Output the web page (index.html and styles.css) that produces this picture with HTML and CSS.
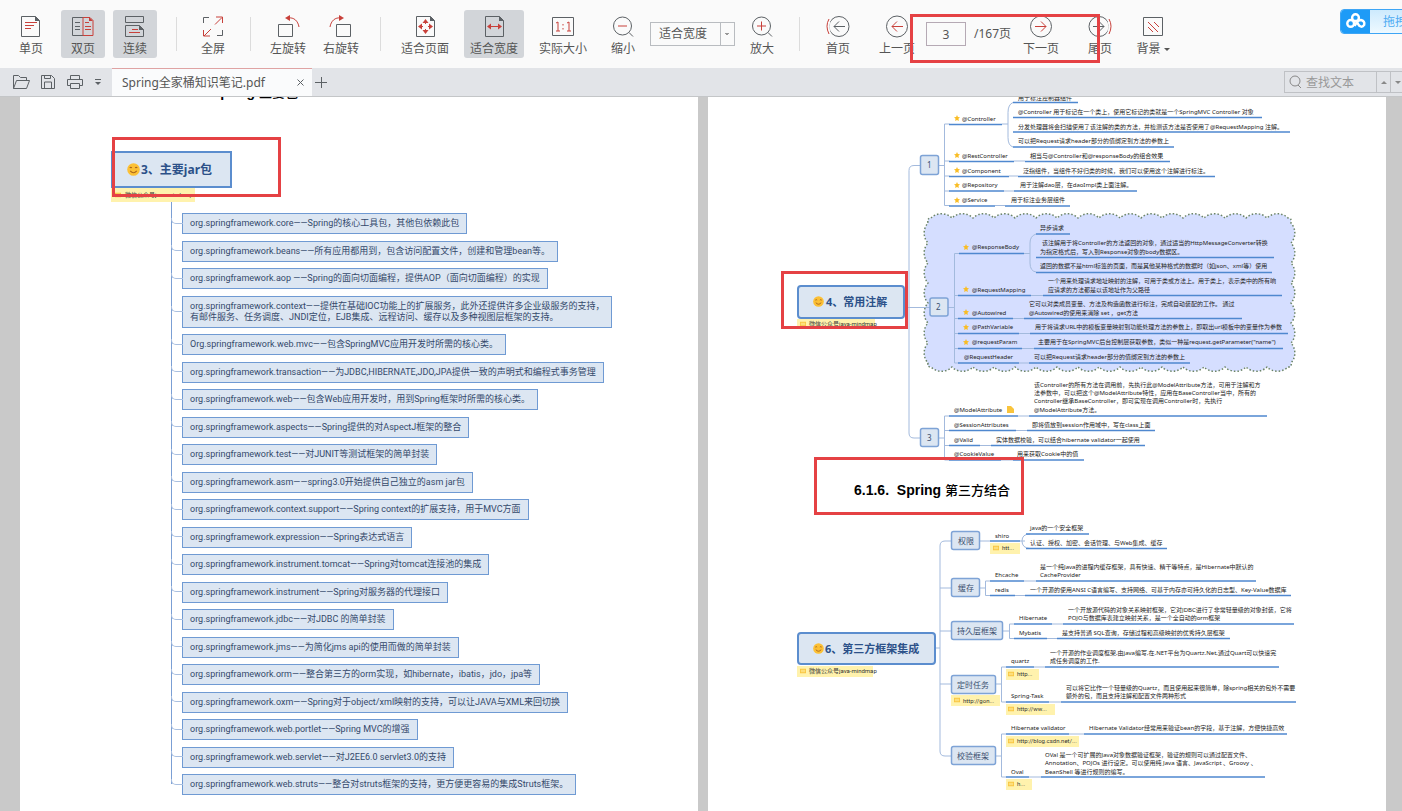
FILE: index.html
```html
<!DOCTYPE html>
<html lang="zh-CN">
<head>
<meta charset="utf-8">
<title>Spring全家桶知识笔记.pdf</title>
<link rel="stylesheet" href="styles.css">
</head>
<body>
<header class="toolbar">
  <div class="group view-group">
    <button class="tool"><svg class="icon" viewBox="0 0 24 24"><path class="g" d="M2.500 2.500h14l4 4v16h-18z"/><path class="gf" d="M16 2l5 5h-5z"/><path class="r" d="M6 8.500h12M6 11.500h9M6 14.500h6"/></svg>单页</button>
    <button class="tool active"><svg class="icon" viewBox="0 0 24 24"><path class="g" d="M12 3.500H1.500v18H12M4 8.500h5M4 12.500h5M4 15.500h5"/><path class="r" d="M12 3.500h7l3 3v15H12zM14 8.500h4M14 12.500h6M14 15.500h6"/><path class="rf" d="M18 3l4 4h-4z"/></svg>双页</button>
    <button class="tool active"><svg class="icon" viewBox="0 0 24 24"><path class="g" d="M2.500 2.500h18v6h-18zM2.500 22.500v-11h14l4 4v7z"/><path class="gf" d="M16 11l5 5h-5z"/><path class="r" d="M9 15.500h6M6 18.500h11"/></svg>连续</button>
  </div>
  <span class="sep"></span>
  <div class="group"><button class="tool"><svg class="icon" viewBox="0 0 24 24"><path class="g" d="M2.500 9V3.500H8M21.500 16v5.500H16"/><path class="r" d="M14 10.500l7-7M15 3h6.500v6M10 15l-7 7M2.500 16v6H9"/></svg>全屏</button></div>
  <span class="sep"></span>
  <div class="group rotate-group">
    <button class="tool three"><svg class="icon" viewBox="0 0 24 24"><path class="g" d="M2.500 10.500h14v12h-14z"/><path class="r" d="M12 4c6-1 10 3 11 9"/><path class="rf" d="M9 4l5-3v6z"/></svg>左旋转</button>
    <button class="tool three"><svg class="icon" viewBox="0 0 24 24"><path class="g" d="M7.500 10.500h14v12h-14z"/><path class="r" d="M12 4C6 3 2 7 1 13"/><path class="rf" d="M15 4l-5-3v6z"/></svg>右旋转</button>
  </div>
  <span class="sep"></span>
  <div class="group fit-group">
    <button class="tool four"><svg class="icon" viewBox="0 0 24 24"><path class="g" d="M3.500 2.500h14l4 4v16h-18z"/><path class="gf" d="M17 2l5 5h-5z"/><path class="r" d="M12.500 7v3M12.500 15v3M7 12.500h3M15 12.500h3"/><path class="rf" d="M12.500 5l3 4h-6zM12.500 20l3-4h-6zM5 12.500l4-3v6zM20 12.500l-4-3v6z"/></svg>适合页面</button>
    <button class="tool four active"><svg class="icon" viewBox="0 0 24 24"><path class="g" d="M3.500 2.500h14l4 4v16h-18z"/><path class="gf" d="M17 2l5 5h-5z"/><path class="r" d="M6 12.500h13"/><path class="rf" d="M5 12.500l4-3v6zM20 12.500l-4-3v6z"/></svg>适合宽度</button>
    <button class="tool four"><svg class="icon" viewBox="0 0 24 24"><path class="g" d="M1.500 3.500h21v18h-21z"/><path class="r" d="M5 9l2-1v9M5 17h4M16 9l2-1v9M16 17h4M12 10v1.500M12 14v1.500"/></svg>实际大小</button>
  </div>
  <div class="group zoom-group">
    <button class="tool"><svg class="icon" viewBox="0 0 24 24"><circle class="g" cx="11.500" cy="12" r="9"/><path class="g" d="M18 18.500l4 4"/><path class="r" d="M7 12h9"/></svg>缩小</button>
    <select class="zoom-select" aria-label="缩放"><option>适合宽度</option></select>
    <button class="tool"><svg class="icon" viewBox="0 0 24 24"><circle class="g" cx="11.500" cy="12" r="9"/><path class="g" d="M18 18.500l4 4"/><path class="r" d="M7 12h9M11.500 7.500v9"/></svg>放大</button>
  </div>
  <span class="sep"></span>
  <div class="group page-group">
    <button class="tool"><svg class="icon" viewBox="0 0 24 24"><circle class="g" cx="13" cy="12.500" r="10"/><path class="g" d="M8 12.500h11M13 7.500l-5 5 5 5"/><path class="halo" d="M4 4q-4 8 0 17"/><path class="r" d="M3 5q-4 7 0 15"/></svg>首页</button>
    <div class="group pager">
      <button class="tool three"><svg class="icon" viewBox="0 0 24 24"><circle class="g" cx="12" cy="12.500" r="10.500"/><path class="r" d="M7 12.500h11M12 7.500l-5 5 5 5"/></svg>上一页</button>
      <input class="page-input" aria-label="页码" value="3">
      <span class="page-total">/167页</span>
      <button class="tool three"><svg class="icon" viewBox="0 0 24 24"><circle class="g" cx="12" cy="12.500" r="10.500"/><path class="r" d="M6 12.500h11M12 7.500l5 5-5 5"/></svg>下一页</button>
      <span class="mark mark-pager"></span>
    </div>
    <button class="tool"><svg class="icon" viewBox="0 0 24 24"><circle class="g" cx="11" cy="12.500" r="10"/><path class="g" d="M5 12.500h11M11 7.500l5 5-5 5"/><path class="halo" d="M20 4q4 8 0 17"/><path class="r" d="M21 5q4 7 0 15"/></svg>尾页</button>
  </div>
  <button class="tool bg-tool"><svg class="icon" viewBox="0 0 24 24"><path class="g" d="M2.500 3.500h19v18h-19z"/><path class="r" d="M7 8l10 10M13 8l5 5M7 13l5 5"/></svg><span>背景<i class="caret"></i></span></button>
  <button class="cloud"><svg class="cloud-logo" viewBox="0 0 30 25"><path fill="#1e9bf7" d="M4 0h26v25H4q-4 0-4-4V4q0-4 4-4z"/><g fill="none" stroke="#fff" stroke-width="2.500"><circle cx="15" cy="8.500" r="3.500"/><circle cx="10" cy="14.500" r="3.500"/><path d="M15.500 12l3.500 5q3 2 5-1 1-4-3.500-5-3 0-6.500 6"/></g></svg><span class="cloud-text">拖拽上传</span></button>
</header>

<nav class="tabbar">
  <div class="quick">
    <button class="quick-btn" aria-label="打开"><svg viewBox="0 0 18 16"><path class="g" d="M1.500 14.500v-13h5l2 2h6v3M1.500 14.500l3-8h13l-3 8z"/></svg></button>
    <button class="quick-btn" aria-label="保存"><svg viewBox="0 0 18 16"><path class="g" d="M2.500 1.500h10l3 3v10h-13zM5.500 1.500v3h6v-3M5.500 14v-6h7v6"/></svg></button>
    <button class="quick-btn" aria-label="打印"><svg viewBox="0 0 18 16"><path class="g" d="M4.500 5V1.500h9V5M4.500 11.500h-3v-6h15v6h-3M4.500 9.500h9v5h-9z"/></svg></button>
    <button class="quick-btn small" aria-label="更多"><svg viewBox="0 0 10 16"><path class="g" d="M2 5.500h6"/><path class="gf" d="M2 8h6l-3 3z"/></svg></button>
  </div>
  <div class="tab"><span>Spring全家桶知识笔记.pdf</span><button class="tab-close" aria-label="关闭"><svg viewBox="0 0 10 10"><path class="g" d="M1.500 1.500l6 6M7.500 1.500l-6 6"/></svg></button></div>
  <button class="tab-add" aria-label="新建标签"><svg viewBox="0 0 12 12"><path class="g" d="M0 6.500h12M6.500 1v11"/></svg></button>
  <div class="search">
    <svg class="search-icon" viewBox="0 0 14 14"><circle cx="6" cy="6" r="5"/><path d="M9 10l3 3"/></svg>
    <input class="search-input" aria-label="查找文本" placeholder="查找文本">
    <button class="search-nav" aria-label="上一个"><i class="caret up"></i></button>
    <button class="search-nav" aria-label="下一个"><i class="caret"></i></button>
  </div>
</nav>

<svg class="defs" aria-hidden="true">
  <symbol id="smile" viewBox="0 0 12 12"><circle cx="6" cy="6" r="5.800" fill="#fcc035"/><path d="M2.500 4.500q1-1 2 0M7.500 4.500q1-1 2 0M3 7.200q3 3.500 6 0" fill="none" stroke="#a8641c"/></symbol>
  <symbol id="star" viewBox="0 0 12 12"><path fill="#f9bd25" d="M6 0l1.800 4 4.200.5-3.100 3L9.700 12 6 9.800 2.300 12l.8-4.500L0 4.500 4.200 4z"/></symbol>
  <symbol id="memo" viewBox="0 0 8 8"><path fill="#f9c43c" d="M0 1h8v6H0z"/><path stroke="#fff2ad" d="M1 3h6M1 5h6"/></symbol>
</svg>

<main class="viewer">
  <section class="page">
    <h2 class="heading clipped">6.1.5.&nbsp; Spring <span class="cjk">主要包</span></h2>
    <div class="jar-map">
      <span class="mark mark-jar"></span>
      <div class="topic"><svg class="smile"><use href="#smile"/></svg>3、主要jar包</div>
      <div class="note"><svg class="memo"><use href="#memo"/></svg>微信公众号java-mindmap</div>
      <ul class="jars">
        <li>org.springframework.core——Spring的核心工具包，其他包依赖此包</li>
        <li>org.springframework.beans——所有应用都用到，包含访问配置文件，创建和管理bean等。</li>
        <li>org.springframework.aop ——Spring的面向切面编程，提供AOP（面向切面编程）的实现</li>
        <li>org.springframework.context——提供在基础IOC功能上的扩展服务，此外还提供许多企业级服务的支持，<br>有邮件服务、任务调度、JNDI定位，EJB集成、远程访问、缓存以及多种视图层框架的支持。</li>
        <li>Org.springframework.web.mvc——包含SpringMVC应用开发时所需的核心类。</li>
        <li>org.springframework.transaction——为JDBC,HIBERNATE,JDO,JPA提供一致的声明式和编程式事务管理</li>
        <li>org.springframework.web——包含Web应用开发时，用到Spring框架时所需的核心类。</li>
        <li>org.springframework.aspects——Spring提供的对AspectJ框架的整合</li>
        <li>org.springframework.test——对JUNIT等测试框架的简单封装</li>
        <li>org.springframework.asm——spring3.0开始提供自己独立的asm jar包</li>
        <li>org.springframework.context.support——Spring context的扩展支持，用于MVC方面</li>
        <li>org.springframework.expression——Spring表达式语言</li>
        <li>org.springframework.instrument.tomcat——Spring对tomcat连接池的集成</li>
        <li>org.springframework.instrument——Spring对服务器的代理接口</li>
        <li>org.springframework.jdbc——对JDBC 的简单封装</li>
        <li>org.springframework.jms——为简化jms api的使用而做的简单封装</li>
        <li>org.springframework.orm——整合第三方的orm实现，如hibernate，ibatis，jdo，jpa等</li>
        <li>org.springframework.oxm——Spring对于object/xml映射的支持，可以让JAVA与XML来回切换</li>
        <li>org.springframework.web.portlet——Spring MVC的增强</li>
        <li>org.springframework.web.servlet——对J2EE6.0 servlet3.0的支持</li>
        <li>org.springframework.web.struts——整合对struts框架的支持，更方便更容易的集成Struts框架。</li>
      </ul>
    </div>
  </section>

  <section class="page">
    <svg class="map" viewBox="708 97 678 368">
      <path class="cloud-shape" d="M931 218a15 15 0 0 1 21 0a15 15 0 0 1 21 0a15 15 0 0 1 21 0a15 15 0 0 1 21 0a15 15 0 0 1 21 0a15 15 0 0 1 21 0a15 15 0 0 1 21 0a15 15 0 0 1 21 0a15 15 0 0 1 21 0a15 15 0 0 1 21 0a15 15 0 0 1 21 0a15 15 0 0 1 21 0a15 15 0 0 1 21 0a15 15 0 0 1 21 0a15 15 0 0 1 21 0a15 15 0 0 1 21 0a15 15 0 0 1 21 0q4 0 3 5a15 15 0 0 1 0 20a15 15 0 0 1 0 20a15 15 0 0 1 0 20a15 15 0 0 1 0 20a15 15 0 0 1 0 20a15 15 0 0 1 0 20a15 15 0 0 1 0 20q1 4-3 4a15 15 0 0 1-21 0a15 15 0 0 1-21 0a15 15 0 0 1-21 0a15 15 0 0 1-21 0a15 15 0 0 1-21 0a15 15 0 0 1-21 0a15 15 0 0 1-21 0a15 15 0 0 1-21 0a15 15 0 0 1-21 0a15 15 0 0 1-21 0a15 15 0 0 1-21 0a15 15 0 0 1-21 0a15 15 0 0 1-21 0a15 15 0 0 1-21 0a15 15 0 0 1-21 0a15 15 0 0 1-21 0a15 15 0 0 1-21 0q-4 0-3-4a15 15 0 0 1 0-20a15 15 0 0 1 0-20a15 15 0 0 1 0-20a15 15 0 0 1 0-20a15 15 0 0 1 0-20a15 15 0 0 1 0-20a15 15 0 0 1 0-20q-1-5 3-5z"/>
      <path class="link" d="M920 165.500h-6q-5 0-5 5V433q0 5 5 5h6M905 307.500h25M939 165.500h5.500M944.500 124V205.500M944.500 124h5M944.500 161h5M944.500 176h5M944.500 191h5M944.500 205.500h5M1002 124h6M1013 102.500q-5 2-5 10v25q0 8 5 9.500M1014 161h11M1009 176h9M1004 191h10M995 205.500h10M948 307.500h6M954.500 253.500V363M954.500 253.500h5M954.500 295.500h5M954.500 318.500h5M954.500 333.500h5M954.500 348.500h5M954.500 363h5M1024 253.500h6M1036 234q-6 2-6 9v20q0 8 6 9M1031 295.500h12M1013 318.500h11M1019 333.500h11M1022 348.500h12M1019 363h10M939 438h5.500M944.500 416V460M944.500 416h5M944.500 430.500h5M944.500 445.500h5M944.500 460h5M1018 416h11M1016 430.500h11M980 445.500h11M1001 460h12"/>
      <path class="rule" d="M1013 102.500H1078M1013 117.500H1262M1013 132H1290M1013 147H1174M949 124.500H1002M949 161.500H1014M1025 161.500H1170M949 176.500H1009M1018 176.500H1215M949 191H1004M1014 191H1137M949 206H995M1005 206H1070M959 253.500H1024M1036 234H1070M1036 257.500H1274M1036 272.500H1272M958 295.500H1031M1043 295.500H1282M958 318.500H1013M1024 318.500H1242M958 333.500H1019M1030 333.500H1288M958 348.500H1022M1034 348.500H1283M958 363H1019M1029 363H1190M949 416H1018M1029 416H1267M949 430.500H1016M1027 430.500H1155M949 445.500H980M991 445.500H1145M949 460H1001M1013 460H1084"/>
      <g class="node"><rect x="920.500" y="155.500" width="18" height="19" rx="2"/><rect x="930" y="298" width="18" height="18" rx="2"/><rect x="920.500" y="428.500" width="18" height="18" rx="2"/></g>
      <g class="num"><text x="927" y="168">1</text><text x="936" y="310">2</text><text x="927" y="441">3</text></g>
      <rect class="memo-bg" x="797" y="319" width="78" height="10"/>
      <use href="#memo" x="800" y="321" width="6" height="6"/>
      <rect class="root" x="798" y="286" width="106" height="32" rx="3"/>
      <use href="#smile" x="813" y="296" width="11" height="11"/>
      <text class="root-text" x="826" y="306">4、常用注解</text>
      <use href="#star" x="954" y="115" width="6" height="6"/><use href="#star" x="954" y="152" width="6" height="6"/><use href="#star" x="954" y="167" width="6" height="6"/><use href="#star" x="954" y="182" width="6" height="6"/><use href="#star" x="954" y="197" width="6" height="6"/><use href="#star" x="963" y="244" width="6" height="6"/><use href="#star" x="963" y="286" width="6" height="6"/><use href="#star" x="963" y="309" width="6" height="6"/><use href="#star" x="963" y="324" width="6" height="6"/><use href="#star" x="963" y="339" width="6" height="6"/>
      <path fill="#f9c43c" d="M1007 406h4l3 3v4h-7z"/>
      <text class="memo-text" x="809" y="326">微信公众号java-mindmap</text>
      <g class="leaf">
        <text x="1018" y="100">用于标注控制器组件</text>
        <text x="1018" y="114">@Controller 用于标记在一个类上，使用它标记的类就是一个SpringMVC Controller 对象</text>
        <text x="1018" y="129">分发处理器将会扫描使用了该注解的类的方法，并检测该方法是否使用了@RequestMapping 注解。</text>
        <text x="1018" y="143">可以把Request请求header部分的值绑定到方法的参数上</text>
        <text x="962" y="121">@Controller</text>
        <text x="962" y="158">@RestController</text><text x="1030" y="158">相当与@Controller和@responseBody的组合效果</text>
        <text x="962" y="173">@Component</text><text x="1023" y="173">泛指组件，当组件不好归类的时候，我们可以使用这个注解进行标注。</text>
        <text x="962" y="187">@Repository</text><text x="1020" y="187">用于注解dao层，在daoImpl类上面注解。</text>
        <text x="962" y="202">@Service</text><text x="1011" y="202">用于标注业务层组件</text>
        <text x="972" y="249">@ResponseBody</text>
        <text x="1040" y="230">异步请求</text>
        <text x="1042" y="245">该注解用于将Controller的方法返回的对象，通过适当的HttpMessageConverter转换</text><text x="1040" y="254">为指定格式后，写入到Response对象的body数据区。</text>
        <text x="1040" y="268">返回的数据不是html标签的页面，而是其他某种格式的数据时（如json、xml等）使用</text>
        <text x="972" y="292">@RequestMapping</text><text x="1048" y="283">一个用来处理请求地址映射的注解，可用于类或方法上。用于类上，表示类中的所有响</text><text x="1048" y="292">应请求的方法都是以该地址作为父路径</text>
        <text x="972" y="315">@Autowired</text><text x="1029" y="306">它可以对类成员变量、方法及构造函数进行标注，完成自动装配的工作。 通过</text><text x="1029" y="315">@Autowired的使用来消除 set ，get方法</text>
        <text x="972" y="329">@PathVariable</text><text x="1035" y="329">用于将请求URL中的模板变量映射到功能处理方法的参数上，即取出url模板中的变量作为参数</text>
        <text x="972" y="344">@requestParam</text><text x="1038" y="344">主要用于在SpringMVC后台控制层获取参数，类似一种是request.getParameter("name")</text>
        <text x="964" y="359">@RequestHeader</text><text x="1034" y="359">可以把Request请求header部分的值绑定到方法的参数上</text>
        <text x="954" y="412">@ModelAttribute</text>
        <text x="1034" y="387">该Controller的所有方法在调用前，先执行此@ModelAttribute方法，可用于注解和方</text><text x="1034" y="395">法参数中，可以把这个@ModelAttribute特性，应用在BaseController当中，所有的</text><text x="1034" y="403">Controller继承BaseController，即可实现在调用Controller时，先执行</text><text x="1034" y="412">@ModelAttribute方法。</text>
        <text x="954" y="427">@SessionAttributes</text><text x="1032" y="427">即将值放到session作用域中，写在class上面</text>
        <text x="954" y="442">@Valid</text><text x="996" y="442">实体数据校验，可以结合hibernate validator一起使用</text>
        <text x="954" y="456">@CookieValue</text><text x="1017" y="456">用来获取Cookie中的值</text>
      </g>
      <rect class="mark-box" x="782.500" y="272.500" width="124" height="55"/>
    </svg>
    <div class="section-title"><span class="mark mark-title"></span><h2 class="heading">6.1.6.&nbsp; Spring <span class="cjk">第三方结合</span></h2></div>
    <svg class="map" viewBox="708 520 678 291">
      <path class="link" d="M936 648h4M951 541h-6q-5 0-5 5V751q0 5 5 5h6M940 588h11M940 631h11M940 684h11M980 541h10M1020 541h5M1030 534q-8 0-8 7t8 7.500M980 588h5.500M990 581h-4.500V595.500h5M1024 581h12M1015 595.500h10M1003 631h6.500M1014 624h-4.500V638.500h5M1052 624h11M1047 638.500h10M996 684h5.500M1006 667h-4.500V702h5M1034 667h11M1049 702h12M996 756h5.500M1006 734h-4.500V777h5M1069 734h15M1029 777h12"/>
      <path class="rule" d="M990 541H1020M1026 534H1089M1026 548.500H1167M990 581H1024M1036 581H1256M990 595.500H1015M1025 595.500H1291M1014 624H1052M1063 624H1294M1014 638.500H1047M1057 638.500H1230M1006 667H1034M1045 667H1279M1006 702H1049M1061 702H1296M1006 734H1069M1084 734H1287M1006 777H1029M1041 777H1265"/>
      <g class="node"><rect x="951.500" y="531.500" width="28" height="18" rx="2"/><rect x="951.500" y="578.500" width="28" height="18" rx="2"/><rect x="951.500" y="621.500" width="51" height="18" rx="2"/><rect x="951.500" y="675.500" width="44" height="18" rx="2"/><rect x="951.500" y="746.500" width="44" height="18" rx="2"/></g>
      <g class="num"><text x="958" y="544">权限</text><text x="958" y="591">缓存</text><text x="957" y="634">持久层框架</text><text x="957" y="688">定时任务</text><text x="957" y="759">校验框架</text></g>
      <g class="memo-bg"><rect x="990" y="543" width="30" height="11"/><rect x="951" y="695" width="49" height="11"/><rect x="1006" y="669" width="33" height="11"/><rect x="1006" y="704" width="49" height="11"/><rect x="1006" y="736" width="73" height="11"/><rect x="1006" y="779" width="26" height="11"/><rect x="797" y="666" width="76" height="11"/></g>
      <use href="#memo" x="993" y="545" width="6" height="6"/><use href="#memo" x="954" y="697" width="6" height="6"/><use href="#memo" x="1008" y="671" width="6" height="6"/><use href="#memo" x="1008" y="706" width="6" height="6"/><use href="#memo" x="1008" y="738" width="6" height="6"/><use href="#memo" x="1008" y="781" width="6" height="6"/><use href="#memo" x="800" y="668" width="6" height="6"/>
      <rect class="root" x="798" y="633" width="137" height="31" rx="3"/>
      <use href="#smile" x="813" y="643" width="11" height="11"/>
      <text class="root-text" x="825" y="653">6、第三方框架集成</text>
      <g class="memo-text"><text x="809" y="673">微信公众号java-mindmap</text><text x="1002" y="550">htt...</text><text x="963" y="703">http://gon...</text><text x="1017" y="676">http...</text><text x="1017" y="711">http://ww...</text><text x="1017" y="743">http://blog.csdn.net/...</text><text x="1017" y="786">h...</text></g>
      <g class="leaf">
        <text x="995" y="538">shiro</text><text x="1030" y="530">java的一个安全框架</text><text x="1030" y="545">认证、授权、加密、会话管理、与Web集成、缓存</text>
        <text x="995" y="577">Ehcache</text><text x="1040" y="569">是一个纯Java的进程内缓存框架，具有快速、精干等特点，是Hibernate中默认的</text><text x="1040" y="577">CacheProvider</text>
        <text x="995" y="592">redis</text><text x="1030" y="592">一个开源的使用ANSI C语言编写、支持网络、可基于内存亦可持久化的日志型、Key-Value数据库</text>
        <text x="1019" y="620">Hibernate</text><text x="1068" y="612">一个开放源代码的对象关系映射框架，它对JDBC进行了非常轻量级的对象封装，它将</text><text x="1068" y="620">POJO与数据库表建立映射关系，是一个全自动的orm框架</text>
        <text x="1019" y="635">Mybatis</text><text x="1062" y="635">是支持普通 SQL查询，存储过程和高级映射的优秀持久层框架</text>
        <text x="1011" y="663">quartz</text><text x="1050" y="655">一个开源的作业调度框架,由java编写,在.NET平台为Quartz.Net,通过Quart可以快速完</text><text x="1050" y="663">成任务调度的工作.</text>
        <text x="1011" y="698">Spring-Task</text><text x="1066" y="690">可以将它比作一个轻量级的Quartz，而且使用起来很简单，除spring相关的包外不需要</text><text x="1066" y="698">额外的包，而且支持注解和配置文件两种形式</text>
        <text x="1011" y="730">Hibernate validator</text><text x="1089" y="730">Hibernate Validator经常用来验证bean的字段，基于注解，方便快捷高效</text>
        <text x="1011" y="774">Oval</text><text x="1045" y="757">OVal 是一个可扩展的Java对象数据验证框架，验证的规则可以通过配置文件、</text><text x="1045" y="765">Annotation、POJOs 进行设定。可以使用纯 Java 语言、JavaScript 、Groovy 、</text><text x="1045" y="774">BeanShell 等进行规则的编写。</text>
      </g>
    </svg>
  </section>
</main>
</body>
</html>
```
FILE: styles.css
```css
* { box-sizing: border-box; }
body {
  margin: 0;
  height: 100vh;
  display: flex;
  flex-direction: column;
  overflow: hidden;
  background: #c9c9c9;
  color: #555;
  font: 12px/16px "Noto Sans", "Noto Sans CJK SC", sans-serif;
}
button, input, select { font: inherit; color: inherit; margin: 0; border: 0; padding: 0; background: none; }
.g { fill: none; stroke: #5c6165; stroke-width: 1; }
.gf { fill: #5c6165; }
.r { fill: none; stroke: #c8403a; stroke-width: 1; }
.rf { fill: #c8403a; }
.halo { fill: none; stroke: #fafafa; stroke-width: 3; }
.defs { position: absolute; width: 0; height: 0; }

.toolbar {
  position: relative;
  z-index: 1;
  flex: none;
  height: 68px;
  padding: 10px 0 0 8px;
  display: flex;
  align-items: flex-start;
  background: #fafafa;
  overflow: hidden;
}
.group { display: flex; flex: none; gap: 8px; }
.view-group { padding-right: 4px; gap: 8px; padding-left: 1px; }
.rotate-group { gap: 5px; margin-left: -1px; }
.fit-group { gap: 9px; margin-right: 8px; }
.zoom-group { gap: 5px; }
.page-group { gap: 13px; padding-left: 2px; margin-right: 9px; }
.pager { gap: 5px; position: relative; }
.tool {
  flex: none;
  width: 44px;
  height: 48px;
  padding-top: 4px;
  display: flex;
  flex-direction: column;
  align-items: center;
  gap: 4px;
  border-radius: 3px;
  line-height: 14px;
  white-space: nowrap;
}
.three { width: 48px; }
.four { width: 60px; }
.active { background: #d2d5d9; }
.icon { width: 24px; height: 24px; flex: none; overflow: visible; }
.sep { flex: none; width: 1px; height: 34px; margin: 7px 14px 0 15px; background: #dcdcdc; }
.zoom-select {
  appearance: none;
  width: 85px;
  height: 24px;
  margin-top: 12px;
  padding-left: 8px;
  border: 1px solid #b9bcc0;
  border-radius: 0;
  background:
    conic-gradient(from -45deg at 50% 100%, #999 90deg, transparent 0) 73px 10px / 6px 3px no-repeat,
    linear-gradient(#b9bcc0, #b9bcc0) 69px 0 / 1px 100% no-repeat;
}
.page-input { width: 40px; height: 24px; margin-top: 12px; border: 1px solid #b5a9b4; text-align: center; }
.page-total { width: 41px; margin-top: 16px; padding-left: 3px; white-space: nowrap; }
.caret {
  display: inline-block;
  margin-left: 3px;
  vertical-align: middle;
  border: 3px solid transparent;
  border-top-color: currentColor;
  border-bottom: 0;
}
.caret.up { border-top: 0; border-bottom: 3px solid currentColor; }
.cloud {
  position: absolute;
  top: 9px;
  right: -28px;
  width: 90px;
  height: 25px;
  display: flex;
  align-items: center;
  border: 1px solid #3da5f5;
  border-radius: 4px;
  background: linear-gradient(#cdeafd, #eef9ff);
  color: #4cabf3;
  overflow: hidden;
}
.cloud-logo { width: 29px; height: 25px; flex: none; }
.cloud-text { padding-left: 13px; white-space: nowrap; }

.tabbar {
  position: relative;
  z-index: 1;
  flex: none;
  height: 29px;
  display: flex;
  align-items: center;
  background: #e2e4e8;
  border-bottom: 1px solid #c4c6c8;
}
.quick { width: 112px; padding-left: 12px; display: flex; gap: 9px; }
.quick-btn { width: 18px; height: 16px; }
.quick-btn svg { display: block; width: 100%; height: 100%; }
.quick-btn.small { width: 10px; }
.tab {
  width: 200px;
  height: 28px;
  padding: 0 6px 0 10px;
  display: flex;
  align-items: center;
  justify-content: space-between;
  background: #fafbfc;
  border-top: 1px solid #dfa3a3;
}
.tab-close { width: 10px; height: 10px; }
.tab-close svg { display: block; }
.tab-add { width: 12px; height: 12px; margin-left: 3px; }
.tab-add svg { display: block; }
.search { display: flex; align-items: center; height: 22px; margin-left: auto; margin-right: -3px; border: 1px solid #bfc1c5; color: #888; }
.search-icon { width: 14px; height: 14px; margin-left: 4px; fill: none; stroke: #888; }
.search-input { width: 73px; height: 20px; padding-left: 3px; }
.search-input::placeholder { color: #999; }
.search-nav { width: 14px; height: 20px; border-left: 1px solid #bfc1c5; line-height: 12px; }
.search-nav .caret { margin: 0; }

.viewer { flex: 1; min-height: 0; display: flex; gap: 10px; padding: 0 16px 0 20px; overflow: hidden; }
.page { flex: 1; min-width: 0; background: #fff; }
.heading { margin: 0; font: bold 14px/20px "Liberation Sans", "Noto Sans CJK SC", sans-serif; color: #000; white-space: nowrap; }
.clipped { height: 20px; margin-top: -15px; padding-left: 148px; }
.mark { position: absolute; border: 3px solid #e54144; pointer-events: none; }
.mark-pager { left: 37px; top: 4px; width: 190px; height: 49px; }
.jar-map { position: relative; padding: 49px 0 0 91px; }
.mark-jar { left: 92px; top: 35px; width: 169px; height: 60px; z-index: 1; }
.topic {
  width: 121px;
  height: 37px;
  display: flex;
  align-items: center;
  padding-left: 14px;
  border: 2px solid #5b8dce;
  background: #dce6f2;
  color: #2c5189;
  font-weight: bold;
}
.smile { width: 13px; height: 13px; margin-right: 1px; }
.note {
  width: 84px;
  height: 14px;
  display: flex;
  align-items: center;
  gap: 4px;
  padding-left: 4px;
  background: #fff2ad;
  color: #333;
  font-family: Roboto, "Noto Sans CJK SC", sans-serif;
  font-size: 6px;
  white-space: nowrap;
}
.memo { width: 6px; height: 6px; }
.jars {
  list-style: none;
  margin: 0 0 0 60px;
  padding: 11px 0 0 11px;
  height: 593px;
  display: flex;
  flex-direction: column;
  align-items: flex-start;
  justify-content: space-between;
  background: linear-gradient(#7b9fd4, #7b9fd4) 0 0 / 1px 582px no-repeat;
}
.jars li {
  position: relative;
  padding: 4px 7px;
  border: 1px solid #6f9ad3;
  background: #dce6f2;
  color: #34496b;
  font-family: Roboto, "Noto Sans CJK SC", sans-serif;
  font-size: 9px;
  line-height: 11px;
  white-space: nowrap;
}
.jars li::before {
  content: "";
  position: absolute;
  left: -12px;
  bottom: 50%;
  width: 11px;
  height: 5px;
  border: solid #a9bfe0;
  border-width: 0 0 1px 1px;
  border-radius: 0 0 0 5px;
}

.map { display: block; width: 100%; font-family: "Noto Sans", "Noto Sans CJK SC", sans-serif; }
.link { fill: none; stroke: #a3badd; stroke-width: 1; }
.rule { fill: none; stroke: #4f88cf; stroke-width: 1.5; }
.node { fill: #dce6f2; stroke: #7ea3d6; stroke-width: 1.5; }
.num { fill: #3a4f70; font-size: 8px; }
.root { fill: #dce6f2; stroke: #5b8dce; stroke-width: 2; }
.root-text { fill: #2c5189; font-size: 11px; font-weight: bold; }
.leaf { fill: #222; font-size: 6px; }
.memo-bg { fill: #fff2ad; }
.memo-text { fill: #333; font-family: Roboto, "Noto Sans CJK SC", sans-serif; font-size: 6px; }
.cloud-shape { fill: #d5deff; stroke: #6b8467; stroke-width: 1.5; stroke-dasharray: 1.5 2; }
.mark-box { fill: none; stroke: #e54144; stroke-width: 3; }
.section-title { position: relative; height: 55px; padding: 15px 0 0 146px; }
.mark-title { left: 106px; top: -8px; width: 210px; height: 58px; }
.cjk { font-size: 13px; font-weight: 500; }
```
